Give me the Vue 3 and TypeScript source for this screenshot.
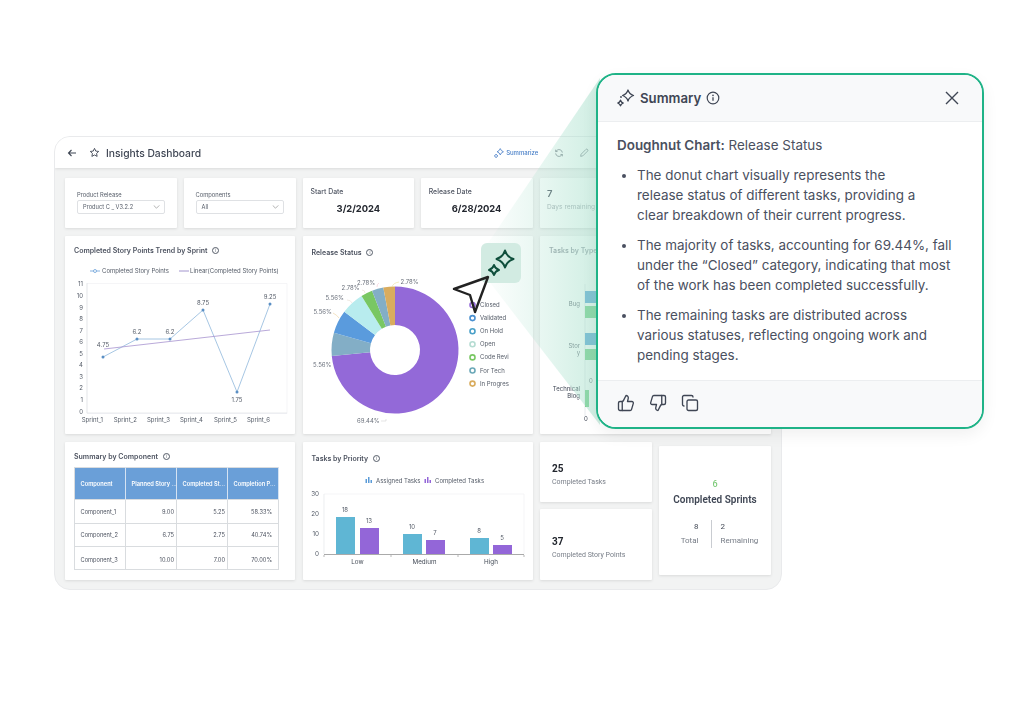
<template>
  <div class="page">
    <div class="frame">
      <header class="topbar">
        <svg class="ic back" viewBox="0 0 12 12" width="12" height="12">
          <path d="M10 6H2.500M5.500 3 2.500 6l3 3" fill="none" stroke="#3f4654" stroke-width="1.100" />
        </svg>
        <svg class="ic star" viewBox="0 0 24 24" width="11" height="11">
          <path
            d="M12 3l2.800 5.900 6.400.8-4.700 4.400 1.200 6.400L12 17.400l-5.700 3.100 1.200-6.400L2.800 9.700l6.400-.8z"
            fill="none"
            stroke="#3f4654"
            stroke-width="2"
            stroke-linejoin="round"
          />
        </svg>
        <span class="dash-title">Insights Dashboard</span>
        <span class="summarize">
          <svg viewBox="0 0 12 12" width="10" height="10">
            <path :d="sparkle(7.500, 4.500, 3.800)" fill="none" stroke="#4a80c8" stroke-width="1" />
            <path :d="sparkle(2.500, 9.500, 2.200)" fill="none" stroke="#4a80c8" stroke-width="1" />
          </svg>
          Summarize
        </span>
        <svg class="tool" viewBox="0 0 24 24" width="10" height="10">
          <path
            d="M20 11a8 8 0 0 0-14-4.500L4 8.500M4 4v4.500h4.500M4 13a8 8 0 0 0 14 4.500l2-2M20 20v-4.500h-4.500"
            fill="none"
            stroke="#7c828b"
            stroke-width="2"
          />
        </svg>
        <svg class="tool" viewBox="0 0 24 24" width="10" height="10">
          <path
            d="M4 20l1-5L16.500 3.500a2.500 2.500 0 0 1 4 4L9 19z"
            fill="none"
            stroke="#7c828b"
            stroke-width="2"
            stroke-linejoin="round"
          />
        </svg>
      </header>

      <div class="board">
        <div class="pair">
          <div class="card filter">
            <label>Product Release</label>
            <div class="select">
              Product C _ V3.2.2
              <svg class="chev" viewBox="0 0 8 5" width="7" height="4">
                <path d="M.5.5 4 4 7.500.5" fill="none" stroke="#777" stroke-width=".7" />
              </svg>
            </div>
          </div>
          <div class="card filter">
            <label>Components</label>
            <div class="select">
              All
              <svg class="chev" viewBox="0 0 8 5" width="7" height="4">
                <path d="M.5.5 4 4 7.500.5" fill="none" stroke="#777" stroke-width=".7" />
              </svg>
            </div>
          </div>
        </div>
        <div class="pair">
          <div class="card date">
            <span class="date-label">Start Date</span>
            <strong>3/2/2024</strong>
          </div>
          <div class="card date">
            <span class="date-label">Release Date</span>
            <strong>6/28/2024</strong>
          </div>
        </div>
        <div class="card days">
          <b>7</b>
          <span>Days remaining</span>
        </div>

        <div class="card chart">
          <h3>Completed Story Points Trend by Sprint <span class="info">i</span></h3>
          <svg class="plot" viewBox="65 266 230 168" width="230" height="168">
            <path d="M90 271h10" stroke="#6a9fd8" stroke-width=".8" />
            <circle cx="95" cy="271" r="1.500" fill="#fff" stroke="#6a9fd8" stroke-width=".8" />
            <text x="102" y="273" class="t6" fill="#555c68">Completed Story Points</text>
            <path d="M179 271h10" stroke="#8c78c0" stroke-width=".8" />
            <text x="190" y="273" class="t6" fill="#555c68">Linear(Completed Story Points)</text>
            <path d="M87 283.500h200v130H87z" fill="none" stroke="#f0f1f3" stroke-width=".7" />
            <path d="M87 283v130h200" fill="none" stroke="#dfe2e6" stroke-width=".7" />
            <text
              v-for="(n, i) in 12"
              :key="i"
              x="83"
              :y="413.500 - i * 11.550"
              text-anchor="end"
              class="t6"
              fill="#555c68"
            >{{ i }}</text>
            <polyline :points="linePoints" fill="none" stroke="#8fb8dc" stroke-width=".8" />
            <path d="M104 349 270 330" stroke="#a793cf" stroke-width=".8" />
            <g v-for="p in sprints" :key="p.name">
              <circle :cx="p.x" :cy="p.y" r="1.500" fill="#5a8fc4" />
              <text :x="p.x" :y="p.ly" text-anchor="middle" class="t6" fill="#555c68">{{ p.label }}</text>
              <text :x="p.x" y="421.500" class="t6" text-anchor="end" fill="#555c68">{{ p.name }}</text>
            </g>
          </svg>
        </div>

        <div class="card chart">
          <h3 class="shift">Release Status <span class="info">i</span></h3>
          <svg class="plot" viewBox="303 266 230 168" width="230" height="168">
            <path v-for="s in slices" :key="s.d" :d="s.d" :fill="s.color" />
            <g fill="none" stroke="#e3d6c8" stroke-width=".5">
              <path d="M392 287q1-4 7-5" stroke="#e7d98a" />
              <path d="M377 287q0-3 2-4" stroke="#f0b8c8" />
              <path d="M365 293q0-3-3-3" />
              <path d="M352 303q-1-3-5-3" />
              <path d="M339 318q-2-3-6-5" stroke="#e9c98a" />
              <path d="M331 363h-2" />
              <path d="M386 419v2h-5" stroke="#c9c9c9" />
            </g>
            <text
              v-for="l in pieLabels"
              :key="l.x"
              :x="l.x"
              :y="l.y"
              class="t6"
              fill="#6b717c"
            >{{ l.t }}</text>
            <g v-for="(l, i) in legend" :key="l.name">
              <circle cx="472.500" :cy="305 + i * 13.100" r="2.500" fill="#fff" :stroke="l.color" stroke-width="1.600" />
              <text x="480" :y="307 + i * 13.100" class="t6" fill="#555c68">{{ l.name }}</text>
            </g>
          </svg>
        </div>

        <div class="card chart">
          <h3 class="faded">Tasks by Type <span class="info">i</span></h3>
          <svg class="plot" viewBox="540 266 231 168" width="231" height="168">
            <path d="M585 284v132" stroke="#dfe2e6" stroke-width=".7" />
            <rect x="585" y="291" width="170" height="12" fill="#5ba6d8" />
            <rect x="585" y="306" width="160" height="12" fill="#74cf88" />
            <rect x="585" y="333" width="150" height="12" fill="#5ba6d8" />
            <rect x="585" y="349" width="130" height="11" fill="#74cf88" />
            <rect x="585" y="390" width="4" height="17" fill="#74cf88" />
            <g class="t6" fill="#6b717c" text-anchor="end">
              <text x="580" y="306">Bug</text>
              <text x="580" y="348">Stor</text>
              <text x="580" y="355">y</text>
            </g>
            <g class="t6" fill="#3f4654" text-anchor="end">
              <text x="580" y="391">Technical</text>
              <text x="580" y="398">Blog</text>
            </g>
            <text x="586" y="421" class="t6" text-anchor="middle" fill="#3f4654">0</text>
            <text x="591" y="383" class="t6" text-anchor="middle" fill="#6b717c">0</text>
          </svg>
        </div>

        <div class="card chart low">
          <h3 class="tight">Summary by Component <span class="info">i</span></h3>
          <table class="grid-table">
            <thead>
              <tr>
                <th>Component</th>
                <th>Planned Story ...</th>
                <th>Completed St...</th>
                <th>Completion P...</th>
              </tr>
            </thead>
            <tbody>
              <tr v-for="r in rows" :key="r[0]">
                <td>{{ r[0] }}</td>
                <td>{{ r[1] }}</td>
                <td>{{ r[2] }}</td>
                <td>{{ r[3] }}</td>
              </tr>
            </tbody>
          </table>
        </div>

        <div class="card chart low">
          <h3 class="shift">Tasks by Priority <span class="info">i</span></h3>
          <svg class="plot" viewBox="303 472 230 108" width="230" height="108">
            <g fill="#5b9bd8">
              <rect x="365.500" y="479" width="1.500" height="4" />
              <rect x="368" y="477" width="1.500" height="6" />
              <rect x="370.500" y="480" width="1.500" height="3" />
            </g>
            <text x="376" y="483" class="t6" fill="#555c68">Assigned Tasks</text>
            <g fill="#9366d8">
              <rect x="424.500" y="479" width="1.500" height="4" />
              <rect x="427" y="477" width="1.500" height="6" />
              <rect x="429.500" y="480" width="1.500" height="3" />
            </g>
            <text x="435" y="483" class="t6" fill="#555c68">Completed Tasks</text>
            <path d="M324 494h200M524 494v60" fill="none" stroke="#f0f1f3" stroke-width=".7" />
            <path d="M324 494v60" stroke="#e4e6e9" stroke-width=".7" />
            <g v-for="t in [0, 10, 20, 30]" :key="t">
              <text x="319" :y="556 - t * 2" text-anchor="end" class="t65" fill="#555c68">{{ t }}</text>
            </g>
            <g v-for="b in bars" :key="b.x">
              <rect :x="b.x" :y="b.y" width="19" :height="554 - b.y" :fill="b.color" />
              <text :x="b.x + 9" :y="b.y - 5" text-anchor="middle" class="t6" fill="#555c68">{{ b.v }}</text>
            </g>
            <path d="M324 554.500h200" stroke="#aaa" stroke-width="1" />
            <path d="M324 555v2M391 555v2M458 555v2M524 555v2" stroke="#888" stroke-width=".6" />
            <text x="357.500" y="564" text-anchor="middle" class="t65" fill="#444b57">Low</text>
            <text x="424.500" y="564" text-anchor="middle" class="t65" fill="#444b57">Medium</text>
            <text x="491" y="564" text-anchor="middle" class="t65" fill="#444b57">High</text>
          </svg>
        </div>

        <div class="stats low">
          <div class="stack">
            <div class="card stat first">
              <b>25</b>
              <span>Completed Tasks</span>
            </div>
            <div class="card stat second">
              <b>37</b>
              <span>Completed Story Points</span>
            </div>
          </div>
          <div class="card sprints">
            <em>6</em>
            <b>Completed Sprints</b>
            <div class="split">
              <div class="left"><i>8</i><span>Total</span></div>
              <div class="right"><i>2</i><span>Remaining</span></div>
            </div>
          </div>
        </div>
      </div>
    </div>

    <svg class="beam" viewBox="0 0 1024 728" width="1024" height="728">
      <defs>
        <linearGradient id="beamFill" gradientUnits="userSpaceOnUse" x1="488" y1="200" x2="600" y2="200">
          <stop offset="0" stop-color="#a8e0cc" stop-opacity="0.04" />
          <stop offset="0.5" stop-color="#a8e0cc" stop-opacity="0.28" />
          <stop offset="1" stop-color="#a8e0cc" stop-opacity="0.55" />
        </linearGradient>
      </defs>
      <polygon points="600,78 488,243 488,280 600,425" fill="url(#beamFill)" />
    </svg>

    <div class="spark-btn">
      <svg viewBox="0 0 40 40" width="40" height="40">
        <path :d="sparkle(24, 16, 8.500)" fill="none" stroke="#0f4f3c" stroke-width="2" stroke-linejoin="round" />
        <path :d="sparkle(13, 27, 5)" fill="none" stroke="#0f4f3c" stroke-width="2" stroke-linejoin="round" />
      </svg>
    </div>

    <svg class="cursor" viewBox="0 0 42 42" width="42" height="42">
      <path d="M38 3 4 15l16 6 5 17z" fill="none" stroke="#222" stroke-width="2.400" stroke-linejoin="round" />
    </svg>

    <aside class="panel">
      <div class="panel-head">
        <svg viewBox="0 0 18 18" width="18" height="18">
          <path :d="sparkle(11, 6.500, 5.500)" fill="none" stroke="#3f4654" stroke-width="1.300" stroke-linejoin="round" />
          <path :d="sparkle(3.500, 14, 2.800)" fill="none" stroke="#3f4654" stroke-width="1.300" stroke-linejoin="round" />
          <circle cx="4" cy="8" r=".9" fill="#3f4654" />
        </svg>
        <span class="panel-title">Summary</span>
        <svg viewBox="0 0 14 14" width="14" height="14">
          <circle cx="7" cy="7" r="5.800" fill="none" stroke="#3f4654" stroke-width="1.200" />
          <path d="M7 6.300v3.500" stroke="#3f4654" stroke-width="1.300" />
          <circle cx="7" cy="4.400" r=".8" fill="#3f4654" />
        </svg>
        <svg class="close" viewBox="0 0 14 14" width="14" height="14">
          <path d="M1 1l12 12M13 1 1 13" stroke="#3f4654" stroke-width="1.400" />
        </svg>
      </div>
      <div class="panel-body">
        <p class="lead"><strong>Doughnut Chart:</strong> Release Status</p>
        <ul>
          <li v-for="(b, i) in bullets" :key="i">
            <span v-for="line in b" :key="line" class="line">{{ line }}</span>
          </li>
        </ul>
      </div>
      <div class="panel-foot">
        <svg viewBox="0 0 24 24" width="18" height="18">
          <g fill="none" stroke="#3f4654" stroke-width="1.800" stroke-linejoin="round" stroke-linecap="round">
            <path d="M7 10v12" />
            <path d="M15 5.880 14 10h5.830a2 2 0 0 1 1.920 2.560l-2.330 8A2 2 0 0 1 17.500 22H4a2 2 0 0 1-2-2v-8a2 2 0 0 1 2-2h2.760a2 2 0 0 0 1.790-1.110L12 2a3.130 3.130 0 0 1 3 3.880Z" />
          </g>
        </svg>
        <svg viewBox="0 0 24 24" width="18" height="18">
          <g fill="none" stroke="#3f4654" stroke-width="1.800" stroke-linejoin="round" stroke-linecap="round">
            <path d="M17 14V2" />
            <path d="M9 18.120 10 14H4.170a2 2 0 0 1-1.920-2.560l2.330-8A2 2 0 0 1 6.500 2H20a2 2 0 0 1 2 2v8a2 2 0 0 1-2 2h-2.760a2 2 0 0 0-1.790 1.110L12 22a3.130 3.130 0 0 1-3-3.880Z" />
          </g>
        </svg>
        <svg viewBox="0 0 24 24" width="18" height="18">
          <g fill="none" stroke="#3f4654" stroke-width="1.800" stroke-linejoin="round" stroke-linecap="round">
            <rect x="8" y="8" width="14" height="14" rx="2" />
            <path d="M4 16c-1.100 0-2-.9-2-2V4c0-1.100.9-2 2-2h10c1.100 0 2 .9 2 2" />
          </g>
        </svg>
      </div>
    </aside>
  </div>
</template>

<script setup lang="ts">
  import { computed } from "vue";

  interface Sprint {
    name: string;
    label: string;
    x: number;
    y: number;
    ly: number;
  }

  const sprints: Sprint[] = [
    { name: "Sprint_1", label: "4.75", x: 103, y: 357, ly: 347 },
    { name: "Sprint_2", label: "6.2", x: 137, y: 339, ly: 334 },
    { name: "Sprint_3", label: "6.2", x: 170, y: 339, ly: 334 },
    { name: "Sprint_4", label: "8.75", x: 203, y: 310, ly: 305 },
    { name: "Sprint_5", label: "1.75", x: 237, y: 392, ly: 402 },
    { name: "Sprint_6", label: "9.25", x: 270, y: 304, ly: 299 },
  ];

  const linePoints = computed(() => sprints.map((p) => `${p.x},${p.y}`).join(" "));

  const PIE_X = 395;
  const PIE_Y = 350;
  const OUTER = 63.5;
  const INNER = 25;

  const pieParts = [
    { v: 69.44, color: "#9369d8" },
    { v: 5.56, color: "#83aec6" },
    { v: 5.56, color: "#5a9bdd" },
    { v: 5.56, color: "#b8ecee" },
    { v: 2.78, color: "#79c763" },
    { v: 2.78, color: "#83aec6" },
    { v: 2.78, color: "#d9ac5e" },
  ];

  function polar(r: number, deg: number) {
    const a = ((deg - 90) * Math.PI) / 180;
    return `${PIE_X + r * Math.cos(a)} ${PIE_Y + r * Math.sin(a)}`;
  }

  const slices = computed(() => {
    const total = pieParts.reduce((s, p) => s + p.v, 0);
    let at = 0;
    return pieParts.map((p) => {
      const start = at;
      const end = at + (p.v / total) * 360;
      at = end;
      const big = end - start > 180 ? 1 : 0;
      return {
        color: p.color,
        d: `M ${polar(OUTER, start)} A ${OUTER} ${OUTER} 0 ${big} 1 ${polar(OUTER, end)} L ${polar(INNER, end)} A ${INNER} ${INNER} 0 ${big} 0 ${polar(INNER, start)} Z`,
      };
    });
  });

  const pieLabels = [
    { t: "2.78%", x: 400.5, y: 284 },
    { t: "2.78%", x: 357, y: 285 },
    { t: "2.78%", x: 341.5, y: 290 },
    { t: "5.56%", x: 325.5, y: 300 },
    { t: "5.56%", x: 313.5, y: 313.5 },
    { t: "5.56%", x: 313, y: 366.5 },
    { t: "69.44%", x: 357, y: 423 },
  ];

  const legend = [
    { name: "Closed", color: "#9369d8" },
    { name: "Validated", color: "#4a90d0" },
    { name: "On Hold", color: "#4aa0c8" },
    { name: "Open", color: "#b5dcd2" },
    { name: "Code Revi", color: "#79c763" },
    { name: "For Tech", color: "#6ba8b8" },
    { name: "In Progres", color: "#d9ac5e" },
  ];

  const rows = [
    ["Component_1", "9.00", "5.25", "58.33%"],
    ["Component_2", "6.75", "2.75", "40.74%"],
    ["Component_3", "10.00", "7.00", "70.00%"],
  ];

  const bars = [
    { x: 336, y: 517, v: 18, color: "#5fb6d4" },
    { x: 360, y: 528, v: 13, color: "#9366d8" },
    { x: 403, y: 534, v: 10, color: "#5fb6d4" },
    { x: 426, y: 540, v: 7, color: "#9366d8" },
    { x: 470, y: 538, v: 8, color: "#5fb6d4" },
    { x: 493, y: 545, v: 5, color: "#9366d8" },
  ];

  const bullets = [
    [
      "The donut chart visually represents the",
      "release status of different tasks, providing a",
      "clear breakdown of their current progress.",
    ],
    [
      "The majority of tasks, accounting for 69.44%, fall",
      "under the “Closed” category, indicating that most",
      "of the work has been completed successfully.",
    ],
    [
      "The remaining tasks are distributed across",
      "various statuses, reflecting ongoing work and",
      "pending stages.",
    ],
  ];

  // four point star, sides pulled in
  function sparkle(cx: number, cy: number, r: number): string {
    const k = r * 0.24;
    return (
      `M ${cx} ${cy - r} Q ${cx + k} ${cy - k} ${cx + r} ${cy} ` +
      `Q ${cx + k} ${cy + k} ${cx} ${cy + r} ` +
      `Q ${cx - k} ${cy + k} ${cx - r} ${cy} ` +
      `Q ${cx - k} ${cy - k} ${cx} ${cy - r} Z`
    );
  }
</script>

<style>
  html,
  body {
    margin: 0;
    background: #ffffff;
  }
</style>

<style scoped>
  .page {
    position: relative;
    width: 1024px;
    height: 728px;
    overflow: hidden;
    padding: 136px 0 0 54px;
    box-sizing: border-box;
    background: #ffffff;
    font-family: Inter, "Liberation Sans", sans-serif;
  }

  .frame {
    width: 728px;
    height: 454px;
    box-sizing: border-box;
    border: 1px solid #e9eaec;
    border-radius: 16px;
    background: #f2f3f3;
    overflow: hidden;
    filter: blur(0.3px);
  }

  .topbar {
    height: 31px;
    display: flex;
    align-items: center;
    background: #ffffff;
    box-shadow: 0 1px 3px rgba(0, 0, 0, 0.1);
    padding-left: 11px;
    position: relative;
  }

  .back {
    margin-right: 11px;
  }

  .star {
    margin-right: 6px;
  }

  .dash-title {
    font-size: 10.3px;
    font-weight: 500;
    color: #3f4654;
  }

  .summarize {
    display: flex;
    align-items: center;
    gap: 2px;
    margin-left: 293px;
    font-size: 6px;
    font-weight: 500;
    color: #4a80c8;
  }

  .tool {
    margin-left: 15px;
  }

  .summarize + .tool {
    margin-left: 16px;
  }

  .board {
    display: grid;
    grid-template-columns: 230px 230px 231px;
    grid-template-rows: 50px 198px 138px;
    column-gap: 7.5px;
    row-gap: 8px;
    padding: 10px 0 0 10px;
  }

  .pair {
    display: grid;
    grid-template-columns: 1fr 1fr;
    gap: 6.5px;
  }

  .card {
    background: #ffffff;
    box-shadow: 0 1px 3px rgba(0, 0, 0, 0.1);
    border-radius: 1px;
    box-sizing: border-box;
  }

  .filter {
    padding: 13px 12px 0;
  }

  .filter label {
    display: block;
    font-size: 5.8px;
    color: #555c68;
    line-height: 8px;
  }

  .select {
    position: relative;
    margin-top: 1px;
    height: 14px;
    width: 88px;
    border: 1px solid #dfe1e4;
    border-radius: 2px;
    box-sizing: border-box;
    padding-left: 5px;
    font-size: 5.7px;
    line-height: 12px;
    color: #555c68;
  }

  .chev {
    position: absolute;
    right: 4px;
    top: 4px;
  }

  .date {
    padding: 9px 8px 0;
    display: flex;
    flex-direction: column;
  }

  .date-label {
    font-size: 6.9px;
    font-weight: 500;
    color: #4d5360;
    line-height: 9px;
  }

  .date strong {
    margin-top: 5.5px;
    text-align: center;
    font-size: 9.4px;
    font-weight: 700;
    line-height: 13px;
    color: #22262e;
  }

  .days {
    padding: 10px 7px 0;
    display: flex;
    flex-direction: column;
  }

  .days b {
    font-size: 9.5px;
    font-weight: 600;
    line-height: 12px;
    color: #555c68;
  }

  .days span {
    margin-top: 3px;
    font-size: 6.6px;
    line-height: 9px;
    color: #a8aeb4;
  }

  .chart {
    padding: 0;
    display: flex;
    flex-direction: column;
  }

  h3 {
    margin: 0;
    height: 30px;
    box-sizing: border-box;
    padding: 10px 0 0 9px;
    font-size: 7px;
    font-weight: 600;
    line-height: 9px;
    color: #4d5360;
    white-space: nowrap;
  }

  .shift {
    padding-top: 12px;
  }

  .tight {
    height: 25px;
  }

  .faded {
    color: #9aa0a8;
  }

  .info {
    display: inline-block;
    width: 5px;
    height: 5px;
    margin-left: 3px;
    border: 0.6px solid #555c68;
    border-radius: 50%;
    font-size: 4px;
    line-height: 5px;
    text-align: center;
    font-weight: 400;
    vertical-align: 1px;
  }

  .plot {
    display: block;
  }

  .t6 {
    font-size: 6px;
  }

  .t65 {
    font-size: 6.3px;
  }

  .grid-table {
    margin-left: 9px;
    width: 205px;
    border-collapse: collapse;
    table-layout: fixed;
    font-size: 5.7px;
    border: 0.7px solid #d9dcdf;
  }

  .grid-table th {
    height: 31px;
    background: #6a9fd8;
    color: #ffffff;
    font-weight: 600;
    padding: 0 2px 0 5.5px;
    text-align: left;
    white-space: nowrap;
    overflow: hidden;
    border-right: 0.7px solid #d5e3f3;
  }

  .grid-table td {
    height: 22.5px;
    padding: 0 2px 0 5.5px;
    border: 0.7px solid #d9dcdf;
    color: #4d5360;
    text-align: right;
    white-space: nowrap;
  }

  .grid-table tr:last-child td {
    height: 19px;
    padding-top: 3px;
  }

  .grid-table td:first-child {
    text-align: left;
  }

  .grid-table td:last-child {
    padding-right: 6px;
  }

  .stats {
    display: flex;
    gap: 7px;
  }

  .stack {
    width: 112px;
    display: flex;
    flex-direction: column;
    gap: 7px;
    flex: none;
  }

  .stat {
    display: flex;
    flex-direction: column;
    padding-left: 12px;
  }

  .first {
    height: 60px;
    padding-top: 21px;
  }

  .second {
    height: 71px;
    padding-top: 27px;
  }

  .stat b {
    font-family: Roboto, sans-serif;
    font-size: 10px;
    font-weight: 700;
    line-height: 12px;
    color: #22262e;
  }

  .stat span {
    margin-top: 3px;
    font-family: Roboto, sans-serif;
    font-size: 7px;
    line-height: 9px;
    color: #777d87;
  }

  .sprints {
    width: 112px;
    height: 129px;
    margin-top: 4px;
    display: flex;
    flex-direction: column;
    align-items: center;
    padding-top: 33px;
    font-family: Roboto, sans-serif;
  }

  .sprints em {
    font-style: normal;
    font-size: 9px;
    font-weight: 500;
    line-height: 10px;
    color: #7ecb7a;
  }

  .sprints > b {
    margin-top: 4.5px;
    font-size: 10px;
    font-weight: 600;
    line-height: 12px;
    color: #3f4654;
  }

  .split {
    display: flex;
    margin-top: 14px;
    margin-left: 9px;
    font-size: 8px;
    line-height: 14px;
    color: #777d87;
  }

  .split i {
    display: block;
    font-style: normal;
    color: #444b57;
  }

  .split .left {
    text-align: right;
    padding-right: 12px;
    border-right: 0.7px solid #c9ccd1;
  }

  .split .right {
    padding-left: 9px;
  }

  .beam {
    position: absolute;
    left: 0;
    top: 0;
    pointer-events: none;
  }

  .spark-btn {
    position: absolute;
    left: 481px;
    top: 243px;
    width: 40px;
    height: 40px;
    border-radius: 6px;
    background: #d2ebe2;
  }

  .spark-btn svg {
    display: block;
  }

  .cursor {
    position: absolute;
    left: 450px;
    top: 274px;
  }

  .panel {
    position: absolute;
    left: 596px;
    top: 73px;
    width: 388px;
    height: 356px;
    box-sizing: border-box;
    display: flex;
    flex-direction: column;
    background: #ffffff;
    border: 2px solid #1fb387;
    border-radius: 20px;
    box-shadow: 0 6px 16px rgba(0, 0, 0, 0.06);
    overflow: hidden;
    color: #4a5060;
  }

  .panel-head {
    height: 47px;
    flex: none;
    box-sizing: border-box;
    display: flex;
    align-items: center;
    padding: 0 23px 1px 19px;
    background: #f8f9fa;
    border-bottom: 1px solid #eceef0;
  }

  .panel-title {
    margin: 0 5px;
    font-size: 13.2px;
    font-weight: 600;
    color: #3f4654;
  }

  .close {
    margin-left: auto;
  }

  .panel-body {
    flex: 1;
    padding: 13px 19px 0;
    font-size: 13.45px;
    line-height: 20px;
  }

  .lead {
    margin: 0;
  }

  .lead strong {
    font-weight: 600;
  }

  ul {
    margin: 10px 0 0;
    padding: 0 0 0 20px;
  }

  li {
    margin-bottom: 10px;
  }

  .line {
    display: block;
    white-space: nowrap;
  }

  .panel-foot {
    height: 47px;
    flex: none;
    box-sizing: border-box;
    display: flex;
    align-items: center;
    gap: 14px;
    padding: 0 0 2px 19px;
    background: #f8f9fa;
    border-top: 1px solid #eceef0;
  }
</style>
